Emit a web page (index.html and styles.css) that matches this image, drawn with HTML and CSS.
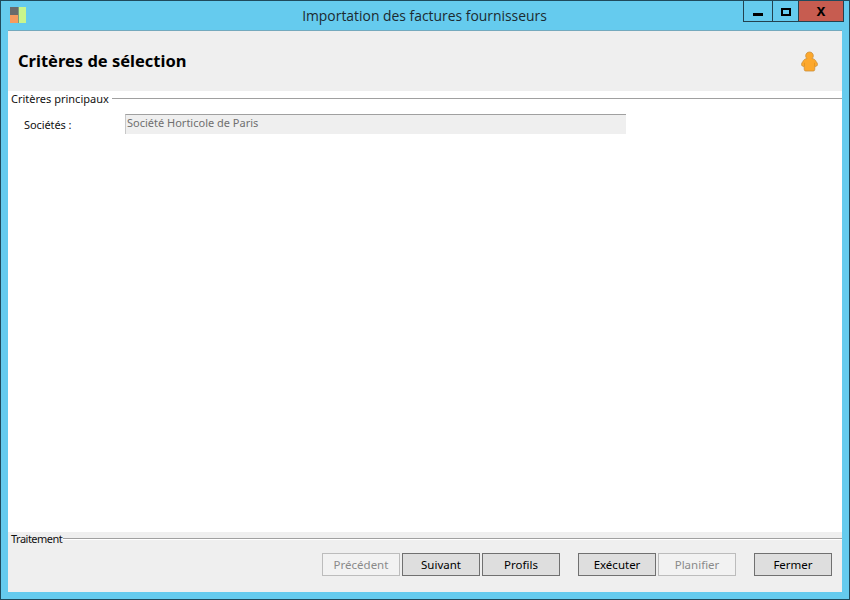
FILE: index.html
```html
<!DOCTYPE html>
<html lang="fr">
<head>
<meta charset="utf-8">
<title>Importation des factures fournisseurs</title>
<link rel="stylesheet" href="styles.css">
</head>
<body>
<div class="window">
  <div class="titlebar">
    <div class="app-side">
      <svg class="app-icon" width="17" height="17" viewBox="0 0 17 17">
        <rect x="0" y="0" width="8" height="8" fill="#6b6b6b"/>
        <rect x="0" y="8" width="8" height="8" fill="#f79a5e"/>
        <rect x="8" y="0" width="1" height="16" fill="#7f9a7c"/>
        <rect x="9" y="0" width="7" height="16" fill="#c9f58c"/>
      </svg>
    </div>
    <div class="title">Importation des factures fournisseurs</div>
    <div class="controls">
      <div class="ctl ctl-min"><span class="glyph-min"></span></div>
      <div class="ctl ctl-max"><span class="glyph-max"></span></div>
      <div class="ctl ctl-close"><span class="glyph-close">x</span></div>
    </div>
  </div>
  <div class="client">
    <header class="head">
      <h1>Critères de sélection</h1>
      <svg class="user" width="17" height="21" viewBox="0 0 17 21">
        <g transform="translate(.5 0)">
          <path d="M5.500 7.500C4.600 6.800 4.200 5.800 4.200 4.800 4.200 2.700 5.800 1 8 1s3.800 1.700 3.800 3.800c0 1-.4 2-1.300 2.700C13 8 14 9 14.600 10.500 15.500 11.500 16 12.500 16 13.500c0 1.300-1.200 2-2.600 2l-.2 3.300c-.1.800-.6 1.200-1.400 1.200H4.200c-.8 0-1.300-.4-1.400-1.200l-.2-3.300C1.200 15.500 0 14.800 0 13.500 0 12.500.5 11.500 1.400 10.500 2 9 3 8 5.500 7.500z" fill="#fda82c" stroke="#c98f3c" stroke-width=".8"/>
          <path d="M3 15.400V11.800M13 15.400V11.800" stroke="#d98e22" stroke-width=".7" fill="none"/>
        </g>
      </svg>
    </header>
    <main class="main">
      <div class="group">
        <span class="group-label">Critères principaux</span>
        <span class="group-line"></span>
      </div>
      <div class="field">
        <label class="field-label">Sociétés :</label>
        <div class="field-value">Société Horticole de Paris</div>
      </div>
    </main>
    <footer class="foot">
      <div class="group group-foot">
        <span class="group-label group-label-foot">Traitement</span>
        <span class="group-line group-line-foot"></span>
      </div>
      <div class="actions">
        <button class="btn" disabled>Précédent</button>
        <button class="btn">Suivant</button>
        <button class="btn">Profils</button>
        <button class="btn btn-sep">Exécuter</button>
        <button class="btn" disabled>Planifier</button>
        <button class="btn btn-sep">Fermer</button>
      </div>
    </footer>
  </div>
</div>
</body>
</html>
```
FILE: styles.css
```css
* { box-sizing: border-box; }
html, body { margin: 0; height: 100%; }
body { font-family: "Noto Sans", "Open Sans", sans-serif; }
.window {
  width: 850px;
  height: 600px;
  background: #65cbee;
  border: 1px solid #1f4a5c;
  display: flex;
  flex-direction: column;
  padding: 0 7px 7px;
}
.titlebar {
  height: 30px;
  flex: none;
  margin: 0 -6px 0 -7px;
  display: grid;
  grid-template-columns: 1fr auto 1fr;
  align-items: start;
}
.app-side { padding: 6px 0 0 9px; }
.app-icon { display: block; }
.title {
  font-family: "Open Sans", sans-serif;
  font-size: 13.9px;
  line-height: 30px;
  color: #1c2a30;
}
.controls {
  justify-self: end;
  display: flex;
  height: 21px;
  margin-right: 4px;
  border: 1px solid #23424f;
  border-top: 0;
}
.ctl {
  height: 20px;
  display: flex;
  align-items: center;
  justify-content: center;
  border-left: 1px solid #23424f;
}
.ctl-min { width: 28px; border-left: 0; }
.ctl-max { width: 26px; }
.ctl-close { width: 45px; background: #c75c50; }
.glyph-min { width: 10px; height: 3px; background: #000; margin-top: 6px; }
.glyph-max { width: 10px; height: 8px; border: 2px solid #000; margin-top: 2px; }
.glyph-close {
  font-family: "Liberation Sans", sans-serif;
  font-size: 16px;
  font-weight: 700;
  line-height: 16px;
  color: #000;
}
.client {
  flex: 1;
  display: flex;
  flex-direction: column;
  background: #fff;
  box-shadow: 0 -1px 0 #74a9bd;
}
.head {
  height: 60px;
  flex: none;
  background: #efefef;
  display: flex;
  align-items: center;
  justify-content: space-between;
  padding: 0 24px 1px 10px;
}
h1 {
  margin: 0;
  font-size: 16.5px;
  font-weight: 700;
  color: #000;
}
.user { display: block; margin-top: 1px; }
.main { flex: 1; }
.group {
  display: flex;
  align-items: center;
  height: 15px;
  padding-left: 3px;
  font-size: 11px;
  color: #111;
}
.group-label { white-space: nowrap; }
.group-line {
  flex: 1;
  height: 2px;
  margin-left: 3px;
  background: linear-gradient(#a0a0a0 50%, #fff 50%);
}
.field {
  display: flex;
  align-items: flex-start;
  padding: 8px 0 0 16px;
  font-size: 11px;
  color: #111;
}
.field-label { width: 101px; padding-top: 3px; letter-spacing: -0.1px; }
.field-value {
  width: 501px;
  height: 20px;
  background: #efefef;
  border-top: 1px solid #a0a0a0;
  border-left: 1px solid #c8c8c8;
  padding-left: 1px;
  line-height: 16px;
  color: #707070;
}
.foot {
  height: 60px;
  flex: none;
  background: #efefef;
}
.group-foot { height: 13px; }
.group-label-foot { letter-spacing: -0.5px; }
.group-line-foot { margin-left: 1px; }
.actions {
  display: flex;
  justify-content: flex-end;
  gap: 2px;
  padding: 8px 10px 0 0;
}
.btn {
  width: 78px;
  height: 23px;
  padding: 0;
  font-family: inherit;
  font-size: 11.5px;
  color: #000;
  background: #dedede;
  border: 1px solid #707070;
}
.btn:disabled {
  color: #8a8a8a;
  background: #f2f2f2;
  border-color: #bcbcbc;
}
.btn-sep { margin-left: 16px; }
```
